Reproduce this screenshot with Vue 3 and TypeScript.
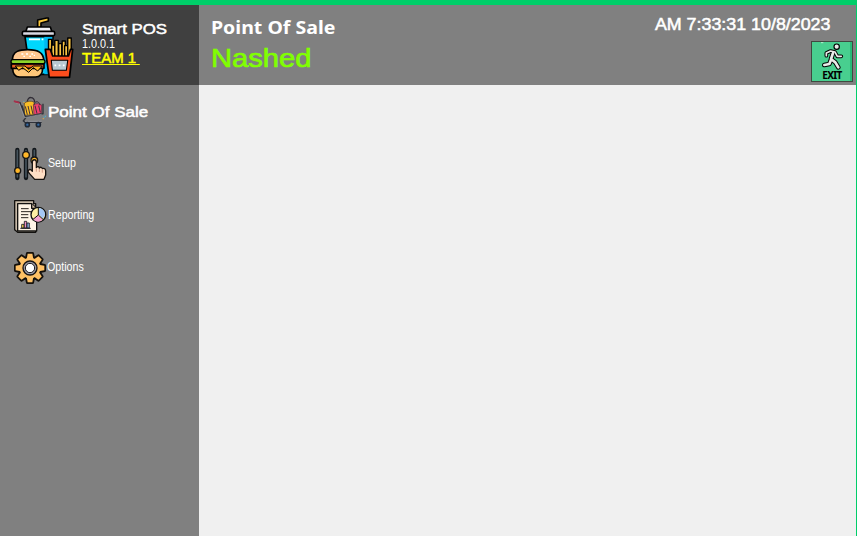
<script setup lang="ts">
import { ref } from 'vue'

type IconName = 'cart' | 'sliders' | 'report' | 'gear'

interface MenuItem {
  label: string
  icon: IconName
}

const menu: MenuItem[] = [
  { label: 'Point Of Sale', icon: 'cart' },
  { label: 'Setup', icon: 'sliders' },
  { label: 'Reporting', icon: 'report' },
  { label: 'Options', icon: 'gear' },
]

const active = ref<IconName>('cart')
const teeth: number[] = [0, 45, 90, 135, 180, 225, 270, 315]
</script>

<template>
  <div class="window">
    <aside class="sidebar">
      <div class="brand">
        <svg class="logo" viewBox="0 0 225 216">
          <g stroke="#000" stroke-width="5" stroke-linejoin="round">
            <path d="M98 45V24l27-6 5 0v9l-22 6v14z" fill="#fdc83c" />
            <path d="M60 74h84l-7 113H76z" fill="#00d7fc" />
            <path d="M118 74h24l-7 113h-17z" fill="#00b9f2" stroke="none" />
            <path d="M67 45h69l5 15H62z" fill="#f2f2f7" />
            <rect x="52" y="58" width="97" height="13" rx="4" fill="#d8d8e2" />
            <path d="M72 82h33M110 82h5" stroke="#fff" stroke-width="5" />
            <g transform="translate(-6 0) scale(1.05 1)">
              <g fill="#f9c343" stroke-width="4">
                <path d="M130 82h9v54h-9z" /><path d="M139 99h9v38h-9z" />
                <path d="M148 85h10v54h-10z" /><path d="M159 95h9v44h-9z" />
                <path d="M169 87h9v52h-9z" /><path d="M176 101h9v38h-9z" />
                <path d="M185 78h10v57h-10z" />
              </g>
              <path d="M121 112h14l7 20h45l6-20h6l-9 84h-58z" fill="#fc4d1d" />
              <path d="M138 145h47l-4 30h-40z" fill="#b8c8d1" stroke-width="3" />
              <path d="M147 160h5m7 0h5m7 0h5" stroke="#fff" />
            </g>
            <path d="M22 145c0-29 24-32 46-32s48 3 48 32z" fill="#ffc890" />
            <path d="M23 168h90c0 18-8 27-22 27H44c-14 0-21-9-21-27z" fill="#ffc779" />
            <path d="M19 156h98v13H19z" fill="#e76024" />
            <path d="M31 162l29 0 11 10 14-10h27l-14 15-13-10-14 14-18-14-12 8z" fill="#ffb52a" stroke-width="3" />
            <rect x="18" y="143" width="102" height="12" rx="6" fill="#8ed52b" stroke-width="4" />
          </g>
          <path d="M49 126h6m8 0h6m10 0h5m-29 7h5m13 0h5m8-3h4" stroke="#fff" stroke-width="4" />
        </svg>
        <div class="brand-text">
          <strong>Smart POS</strong>
          <span class="version">1.0.0.1</span>
          <a>TEAM 1&nbsp;</a>
        </div>
      </div>
      <nav>
        <button
          v-for="item in menu"
          :key="item.icon"
          :class="['item', item.icon, { active: item.icon === active }]"
          @click="active = item.icon"
        >
          <svg v-if="item.icon === 'cart'" viewBox="0 0 126 126">
            <path d="M58 30c0-18 21-18 22 1" fill="none" stroke="#302c35" stroke-width="4" />
            <path d="M49 33c9-6 20-7 29-3l2 38-31 2z" fill="#f9bd27" stroke="#4b3c27" stroke-width="2" />
            <path d="M76 38c8-4 18-4 25 1l-1 25-22 4z" fill="#ef416f" stroke="#5b2d3d" stroke-width="2" />
            <path d="M79 38c0-13 16-11 17 2" fill="none" stroke="#392c3b" stroke-width="3" />
            <path d="M52 43l6 25m2-26l6 26m3-27l6 26m6-26l6 24m5-24l5 20" stroke="#40313a" stroke-width="3" />
            <path d="M22 29l14 3 16 44M42 40l10 35 53-10V35M54 76l-8 11 5 4h50" fill="none" stroke="#303239" stroke-width="4" />
            <path d="M23 32l11 3 16 42 51-10M51 88h50" fill="none" stroke="#b2b5be" stroke-width="1.6" />
            <path d="M20 28l12 4" stroke="#a92f4b" stroke-width="6" stroke-linecap="round" />
            <g fill="#356aa5" stroke="#202936" stroke-width="5"><circle cx="58" cy="98" r="6" /><circle cx="91" cy="98" r="6" /></g>
            <path d="M106 75l4 3m2-7v4m-66-46h3" stroke="#42b6dc" stroke-width="3" /><path d="M104 80h4M46 31h4" stroke="#e9a43b" stroke-width="3" />
          </svg>
          <svg v-else-if="item.icon === 'sliders'" viewBox="0 0 126 126">
            <g stroke-linecap="round">
              <path d="M28 24v84M54 24v84M79 24v70" stroke="#12171b" stroke-width="13" />
              <path d="M28 25v80M54 25v80M79 25v60" stroke="#46545d" stroke-width="5" />
            </g>
            <g fill="#ffb729" stroke="#171717" stroke-width="4"><circle cx="29" cy="86" r="9" /><circle cx="54" cy="39" r="10" /><circle cx="79" cy="55" r="10" /></g>
            <path d="M73 88V60c0-9 12-9 12 0v17c4-5 8-3 9 1 4-4 8-2 9 2 6-3 10 1 10 7v12l-5 13H80L64 94c-8-7-1-14 6-10z" fill="#ffdfc5" stroke="#171310" stroke-width="4" stroke-linejoin="round" />
            <path d="M85 80v9m9-8v9m9-6v8" stroke="#bd7960" stroke-width="2" />
          </svg>
          <svg v-else-if="item.icon === 'report'" viewBox="0 0 126 126">
            <g stroke="#12110f" stroke-width="4" stroke-linejoin="round">
              <path d="M20 20h57v9h6v86H29l-9-8z" fill="#c9bba8" />
              <path d="M29 29h42l15 14v68H29z" fill="#fff5e6" /><path d="M71 29v14h13" fill="#d3bea3" />
            </g>
            <path d="M39 44h23M39 53h33M39 62h22M39 71h22" stroke="#29231e" stroke-width="3" />
            <path d="M41 91h7v11h-7z" fill="#f9d34f" stroke="#191b24" stroke-width="2.5" />
            <path d="M49 82h7v20h-7z" fill="#ed8dc0" stroke="#191b24" stroke-width="2.5" />
            <path d="M57 87h7v15h-7z" fill="#8aaee0" stroke="#191b24" stroke-width="2.5" />
            <path d="M37 103h31" stroke="#191b24" stroke-width="3" />
            <circle cx="91" cy="62" r="22" fill="#fff0a4" stroke="#111" stroke-width="4" />
            <path d="M93 61V42c12 1 18 10 18 21l-7 12z" fill="#a5c9f5" /><path d="M91 63L75 76c9 9 20 9 29 1z" fill="#f5a2cf" />
            <path d="M91 40v23l15 14M91 63L74 77" fill="none" stroke="#111" stroke-width="3" />
          </svg>
          <svg v-else viewBox="0 0 126 126">
            <g stroke="#15110c" stroke-width="8" stroke-linejoin="round">
              <path v-for="angle in teeth" :key="angle" d="M55 36l3-14h16l3 14z" fill="#ffc165" :transform="`rotate(${angle} 66 66)`" />
              <circle cx="66" cy="66" r="32" fill="#ffc165" />
            </g>
            <g fill="#ffc165"><path v-for="angle in teeth" :key="angle" d="M56 40l3-17h14l3 17z" :transform="`rotate(${angle} 66 66)`" /><circle cx="66" cy="66" r="31" /></g>
            <circle cx="66" cy="66" r="21" fill="#9a9aa6" stroke="#171313" stroke-width="4" /><circle cx="66" cy="66" r="14" fill="#fff" stroke="#171313" stroke-width="3" />
          </svg>
          <span>{{ item.label }}</span>
        </button>
      </nav>
    </aside>
    <section class="workspace">
      <header>
        <div class="heading">
          <h1>Point Of Sale</h1>
          <p>Nashed</p>
        </div>
        <div class="status">
          <time>AM 7:33:31 10/8/2023</time>
          <button class="exit" aria-label="Exit">
            <svg viewBox="0 0 120 117">
              <path d="M27 2h7" stroke="#b5edcf" stroke-width="3" />
              <g fill="none" stroke-linecap="round" stroke-linejoin="round">
                <path d="M43 41V33L56 27l13 3 7 13h12" stroke="#000" stroke-width="11" />
                <path d="M63 33L57 51 70 61l9 15M57 53L52 66 37 69" stroke="#000" stroke-width="14" />
                <path d="M43 41V33L56 27l13 3 7 13h12" stroke="#e9ece9" stroke-width="5" />
                <path d="M63 33L57 51 70 61l9 15M57 53L52 66 37 69" stroke="#e9ece9" stroke-width="8" />
              </g>
              <circle cx="74" cy="14" r="8" fill="#e9ece9" stroke="#000" stroke-width="3.5" />
            </svg>
            <span>EXIT</span>
          </button>
        </div>
      </header>
      <main></main>
    </section>
  </div>
</template>

<style>
body { margin: 0; overflow: hidden; }
</style>

<style scoped>
.window { box-sizing: border-box; width: 857px; height: 536px; display: flex; border-top: 5px solid #00ce69; border-right: 1px solid #00ce69; background: #f0f0f0; font-family: "Liberation Sans", Arial, sans-serif; color: #fff; }
.sidebar { width: 199px; background: #808080; }
.brand { box-sizing: border-box; height: 80px; display: flex; padding: 7px 0 0 5px; background: #404040; }
.logo { width: 75px; height: 72px; flex: none; }
.brand-text { display: flex; flex-direction: column; align-items: flex-start; padding: 8px 0 0 2px; white-space: nowrap; }
.brand-text > *, .item span, h1, p { transform-origin: left center; }
.brand-text strong { font-size: 15.5px; line-height: 17px; font-weight: 400; -webkit-text-stroke: .5px #fff; transform: scaleX(1.085); }
.version { font-size: 12px; line-height: 14px; transform: scaleX(.9); }
.brand-text a { color: #ff0; font-size: 14px; line-height: 14px; height: 13px; -webkit-text-stroke: .5px #ff0; border-bottom: 1px solid #ff0; transform: scaleX(1.07); }
nav { display: flex; flex-direction: column; }
.item { display: flex; align-items: center; height: 52px; padding: 0 0 0 8px; border: 0; background: none; color: #fff; font: 12px "Liberation Sans", Arial, sans-serif; text-align: left; }
.item svg { width: 42px; height: 42px; flex: none; }
.item.cart svg { margin-top: 4px; }
.item span { margin-left: -2px; white-space: nowrap; transform: scaleX(.89); }
.item.gear span { margin-left: -3px; }
.item.active span { font-size: 15px; -webkit-text-stroke: .5px #fff; transform: scaleX(1.135); }
.workspace { flex: 1; min-width: 0; }
header { height: 80px; box-sizing: border-box; display: flex; justify-content: space-between; background: #808080; }
.heading { padding: 10px 0 0 12px; }
h1 { margin: 0; font: 700 18.5px/23px "Noto Sans", sans-serif; transform: scaleX(1.055); }
p { margin: 5px 0 0; color: #80ff00; font-size: 26px; line-height: 30px; -webkit-text-stroke: .7px #80ff00; transform: scaleX(1.12); }
.status { display: flex; flex-direction: column; align-items: flex-end; padding: 10px 3px 0 0; }
time { margin-right: 23px; font-size: 16px; line-height: 19px; -webkit-text-stroke: .5px #fff; transform: scaleX(1.115); transform-origin: right center; }
.exit { box-sizing: border-box; width: 42px; height: 41px; margin-top: 7px; padding: 0; border: 1px solid #404840; display: flex; flex-direction: column; align-items: center; background: #48cf8f; color: #000; box-shadow: inset -2px 0 #27b977; overflow: hidden; }
.exit svg { width: 40px; height: 39px; flex: none; }
.exit span { margin-top: -12px; font: 700 10px/12px "Noto Sans", sans-serif; letter-spacing: -.6px; }
</style>
